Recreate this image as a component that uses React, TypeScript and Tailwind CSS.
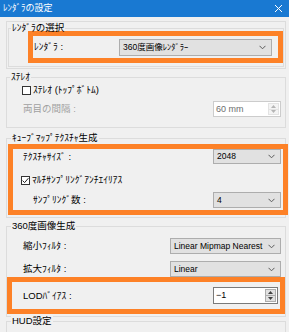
import React from 'react';

function Chevron() {
  return (
    <svg width="7" height="5" viewBox="0 0 7 5" className="shrink-0">
      <polyline points="0.5,0.8 3.5,3.8 6.5,0.8" fill="none" stroke="#5a5a5a" strokeWidth="1" />
    </svg>
  );
}

function Combo({ value, className }: { value: string; className: string }) {
  return (
    <div className={`flex items-center justify-between border border-[#adadad] bg-[#e1e1e1] pl-[3px] pr-[5px] ${className}`}>
      <span className="whitespace-nowrap text-[8.5px] leading-none text-black">{value}</span>
      <Chevron />
    </div>
  );
}

function Spin({ value, disabled, className }: { value: string; disabled?: boolean; className: string }) {
  const arrow = disabled ? '#b5b5b5' : '#404040';
  return (
    <div className={`flex border bg-white ${disabled ? 'border-[#cccccc]' : 'border-[#7a7a7a]'} ${className}`}>
      <span className={`flex flex-1 items-center pl-[2px] text-[9px] leading-none ${disabled ? 'text-[#6d6d6d]' : 'text-black'}`}>
        {value}
      </span>
      <div className={`my-px mr-px flex w-[11px] flex-col border ${disabled ? 'border-[#e3e3e3] bg-[#f4f4f4]' : 'border-[#adadad] bg-[#e1e1e1]'}`}>
        <div className="flex flex-1 items-center justify-center">
          <svg width="5" height="3" viewBox="0 0 5 3">
            <polygon points="2.5,0 5,3 0,3" fill={arrow} />
          </svg>
        </div>
        <div className={`h-px ${disabled ? 'bg-[#e3e3e3]' : 'bg-[#adadad]'}`} />
        <div className="flex flex-1 items-center justify-center">
          <svg width="5" height="3" viewBox="0 0 5 3">
            <polygon points="0,0 5,0 2.5,3" fill={arrow} />
          </svg>
        </div>
      </div>
    </div>
  );
}

function Check({ checked }: { checked?: boolean }) {
  return (
    <div className="flex h-[9px] w-[9px] shrink-0 items-center justify-center border border-[#333333] bg-white">
      {checked && (
        <svg width="7" height="7" viewBox="0 0 7 7">
          <polyline points="0.6,3.6 2.6,5.6 6.4,1.2" fill="none" stroke="#222222" strokeWidth="1" />
        </svg>
      )}
    </div>
  );
}

function Legend({ text, className }: { text: string; className: string }) {
  return (
    <div className={`-mt-[7px] w-fit bg-[#f0f0f0] px-px text-[9.5px] leading-[12px] text-black ${className}`}>{text}</div>
  );
}

export default function App() {
  return (
    <div className="h-[332px] w-[289px] overflow-hidden bg-[#f0f0f0] font-['Liberation_Sans','Noto_Sans_CJK_JP',sans-serif] text-[9.5px] text-black">
      <div className="flex h-[17px] items-center justify-between bg-[#1979d2] pl-[3px] pr-[7px]">
        <span className="text-[9px] leading-none text-white">ﾚﾝﾀﾞﾗの設定</span>
        <svg width="7" height="7" viewBox="0 0 7 7">
          <path d="M0 0 L7 7 M7 0 L0 7" stroke="#ffffff" strokeWidth="1" />
        </svg>
      </div>

      <div className="flex flex-col pt-[4px]">
        {/* レンダラの選択 */}
        <div className="ml-[6px] h-[48px] w-[280px] border border-[#dcdcdc]">
          <div className="ml-px mt-[6px] h-[39px] w-[276px] border border-[#dcdcdc]">
            <Legend text="ﾚﾝﾀﾞﾗの選択" className="ml-[2px]" />
            <div className="-mt-[3px] ml-[19px] flex h-[32px] w-[255px] items-center justify-between border-[5px] border-[#fd8127] pl-px pr-[6px]">
              <span className="leading-none">ﾚﾝﾀﾞﾗ :</span>
              <Combo value="360度画像ﾚﾝﾀﾞﾗｰ" className="h-[17px] w-[153px]" />
            </div>
          </div>
        </div>

        {/* ステレオ */}
        <div className="ml-[6px] mt-[8px] h-[51px] w-[280px] border border-[#dcdcdc]">
          <Legend text="ｽﾃﾚｵ" className="ml-[3px]" />
          <div className="mt-px flex h-[12px] items-center pl-[15px]">
            <Check />
            <span className="ml-[2px] leading-none">ｽﾃﾚｵ (ﾄｯﾌﾟﾎﾞﾄﾑ)</span>
          </div>
          <div className="mt-[5px] flex h-[16px] items-center justify-between pl-[16px] pr-[4px]">
            <span className="leading-none text-[#a0a0a0]">両目の間隔 :</span>
            <Spin value="60 mm" disabled className="h-[16px] w-[68px]" />
          </div>
        </div>

        {/* キューブマップテクスチャ生成 */}
        <div className="ml-[6px] mt-[10px] h-[80px] w-[280px] border border-[#dcdcdc]">
          <Legend text="ｷｭｰﾌﾞﾏｯﾌﾟﾃｸｽﾁｬ生成" className="ml-[4px]" />
          <div className="ml-px flex h-[71px] w-[280px] flex-col border-[5px] border-[#fd8127]">
            <div className="flex h-[15px] items-center justify-between pl-[10px] pr-[2px]">
              <span className="leading-none">ﾃｸｽﾁｬｻｲｽﾞ :</span>
              <Combo value="2048" className="h-[15px] w-[68px]" />
            </div>
            <div className="mt-[10px] flex h-[12px] items-center pl-[8px]">
              <Check checked />
              <span className="ml-[2px] leading-none">ﾏﾙﾁｻﾝﾌﾟﾘﾝｸﾞｱﾝﾁｴｲﾘｱｽ</span>
            </div>
            <div className="mt-[6px] flex h-[16px] items-center justify-between pl-[20px] pr-[2px]">
              <span className="leading-none">ｻﾝﾌﾟﾘﾝｸﾞ数 :</span>
              <Combo value="4" className="h-[16px] w-[68px]" />
            </div>
          </div>
        </div>

        {/* 360度画像生成 */}
        <div className="ml-[6px] mt-[8px] h-[91px] w-[280px] border border-[#dcdcdc]">
          <Legend text="360度画像生成" className="ml-[4px]" />
          <div className="mt-[6px] flex h-[16px] items-center justify-between pl-[16px] pr-[4px]">
            <span className="leading-none">縮小ﾌｨﾙﾀ :</span>
            <Combo value="Linear Mipmap Nearest" className="h-[16px] w-[111px]" />
          </div>
          <div className="mt-[7px] flex h-[16px] items-center justify-between pl-[16px] pr-[4px]">
            <span className="leading-none">拡大ﾌｨﾙﾀ :</span>
            <Combo value="Linear" className="h-[16px] w-[111px]" />
          </div>
          <div className="flex h-[37px] w-[278px] items-center justify-between border-[5px] border-[#fd8127] pl-[11px] pr-[2px]">
            <span className="leading-none">LODﾊﾞｲｱｽ :</span>
            <Spin value="−1" className="h-[17px] w-[65px]" />
          </div>
        </div>

        {/* HUD設定 */}
        <div className="ml-[6px] mt-[4px] h-[40px] w-[280px] border border-[#dcdcdc]">
          <Legend text="HUD設定" className="ml-[4px]" />
        </div>
      </div>
    </div>
  );
}
